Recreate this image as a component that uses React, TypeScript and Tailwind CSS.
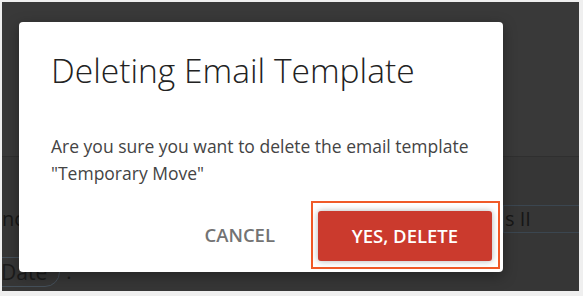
import React from "react";

export default function App() {
  return (
    <div className="h-[296px] w-[583px] overflow-hidden bg-[#efefef] pb-[5px] pl-[2px] pr-[4px] pt-[2px] font-['Open_Sans',sans-serif]">
      <div className="relative h-full w-full overflow-hidden bg-[#363636]">
        {/* Page behind the overlay */}
        <div className="h-[155px] border-b border-[#2f2f2f] bg-[#393939]" />
        <div className="flex items-center justify-between pt-[48px]">
          <span className="text-[20px] leading-none text-[#161616]">nc</span>
          <div className="flex h-[28px] w-[76px] items-center border-y border-l border-[#3b4650] pl-[1px] text-[20px] text-[#161616]">
            s II
          </div>
        </div>
        <div className="mt-[24px] flex items-center gap-[6px] -ml-[14px]">
          <span className="rounded-full border border-[#45505a] px-[12px] py-[2px] text-[21px] leading-[24px] text-[#1b1b1b]">
            Date
          </span>
          <span className="text-[20px] text-[#1b1b1b]">.</span>
        </div>

        {/* Dialog */}
        <div className="absolute left-[17px] top-[20px] flex h-[250px] w-[484px] flex-col rounded-[4px] bg-white pl-[32px] pt-[32px] shadow-[0_4px_14px_rgba(0,0,0,0.35)]">
          <h1 className="text-[33.6px] font-light leading-none text-[#222]">
            Deleting Email Template
          </h1>
          <p className="mt-[45px] w-[430px] text-[17.5px] leading-[27px] text-[#444]">
            Are you sure you want to delete the email template "Temporary Move"
          </p>
          <div className="mt-auto mb-[3px] mr-[3px] flex items-center justify-end gap-[36px]">
            <button className="text-[18.5px] font-semibold leading-none text-[#737373]">
              CANCEL
            </button>
            <div className="border-2 border-[#f05a28] pb-[6px] pl-[5px] pr-[6px] pt-[8px]">
              <button className="flex h-[50px] w-[174px] items-center justify-center rounded-[3px] bg-[#cb3a2d] text-[18.5px] font-semibold leading-none text-white shadow-[0_0_6px_rgba(0,0,0,0.3)]">
                YES, DELETE
              </button>
            </div>
          </div>
        </div>
      </div>
    </div>
  );
}
